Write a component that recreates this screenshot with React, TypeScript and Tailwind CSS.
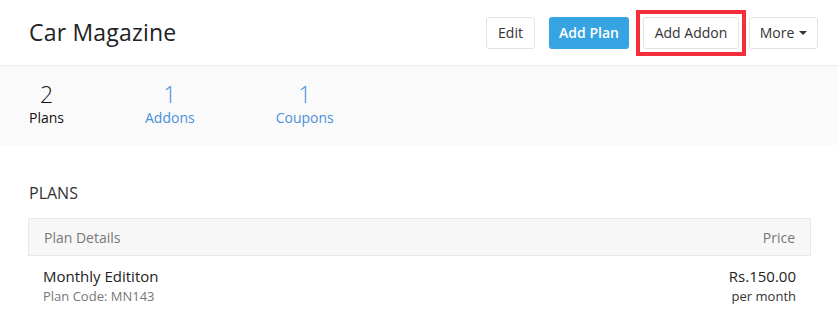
import React from "react";

const stats = [
  { value: "2", label: "Plans", active: true },
  { value: "1", label: "Addons", active: false },
  { value: "1", label: "Coupons", active: false },
];

export default function App() {
  return (
    <div
      className="w-[838px] h-[322px] bg-white overflow-hidden text-[#222]"
      style={{ fontFamily: '"Open Sans", "Liberation Sans", sans-serif' }}
    >
      {/* Header */}
      <div className="h-[66px] flex items-center justify-between pl-[29px] pr-[20px] border-b border-[#ececec]">
        <h1 className="text-[23px] leading-none tracking-[0.2px] -mt-[1px]">Car Magazine</h1>
        <div className="flex items-center">
          <button className="h-[32px] w-[49px] rounded-[3px] border border-[#e2e2e2] bg-white text-[14px] text-[#333]">
            Edit
          </button>
          <button className="ml-[14px] h-[32px] w-[80px] rounded-[3px] bg-[#36a3e3] text-[14px] font-semibold text-white">
            Add Plan
          </button>
          <div className="ml-[7px] border-[4px] border-[#f42f3b] p-[3px]">
            <button className="h-[32px] w-[96px] rounded-[3px] border border-[#e2e2e2] bg-white text-[14px] text-[#333] block">
              Add Addon
            </button>
          </div>
          <button className="ml-[3px] h-[32px] w-[69px] rounded-[3px] border border-[#e2e2e2] bg-white text-[14px] text-[#333] flex items-center justify-center gap-[5px]">
            More
            <span className="w-0 h-0 border-l-[4px] border-r-[4px] border-t-[4px] border-l-transparent border-r-transparent border-t-[#333]" />
          </button>
        </div>
      </div>

      {/* Stats */}
      <div className="h-[79px] bg-[#fafafa] flex items-start pl-[29px] pt-[15px] gap-[81px]">
        {stats.map((s) => (
          <div
            key={s.label}
            className={`flex flex-col items-center ${s.active ? "text-[#111]" : "text-[#4a90d9]"}`}
          >
            <span className="text-[23px] leading-[27px] font-light">{s.value}</span>
            <span className="text-[14px] leading-[19px]">{s.label}</span>
          </div>
        ))}
      </div>

      {/* Plans */}
      <div className="pl-[28px] pr-[27px] pt-[38px]">
        <h2 className="text-[16px] leading-[20px] text-[#333] pl-[1px]">PLANS</h2>
        <div className="mt-[15px] h-[38px] border border-[#e8e8e8] bg-[#f7f7f7] flex items-center justify-between px-[15px] text-[14px] text-[#777]">
          <span>Plan Details</span>
          <span>Price</span>
        </div>
        <div className="flex justify-between px-[15px] pt-[10px]">
          <div className="flex flex-col">
            <span className="text-[15px] leading-[20px] text-[#222]">Monthly Edititon</span>
            <span className="text-[13px] leading-[20px] text-[#777]">Plan Code: MN143</span>
          </div>
          <div className="flex flex-col items-end">
            <span className="text-[15px] leading-[20px] text-[#222]">Rs.150.00</span>
            <span className="text-[13px] leading-[20px] text-[#333]">per month</span>
          </div>
        </div>
      </div>
    </div>
  );
}
